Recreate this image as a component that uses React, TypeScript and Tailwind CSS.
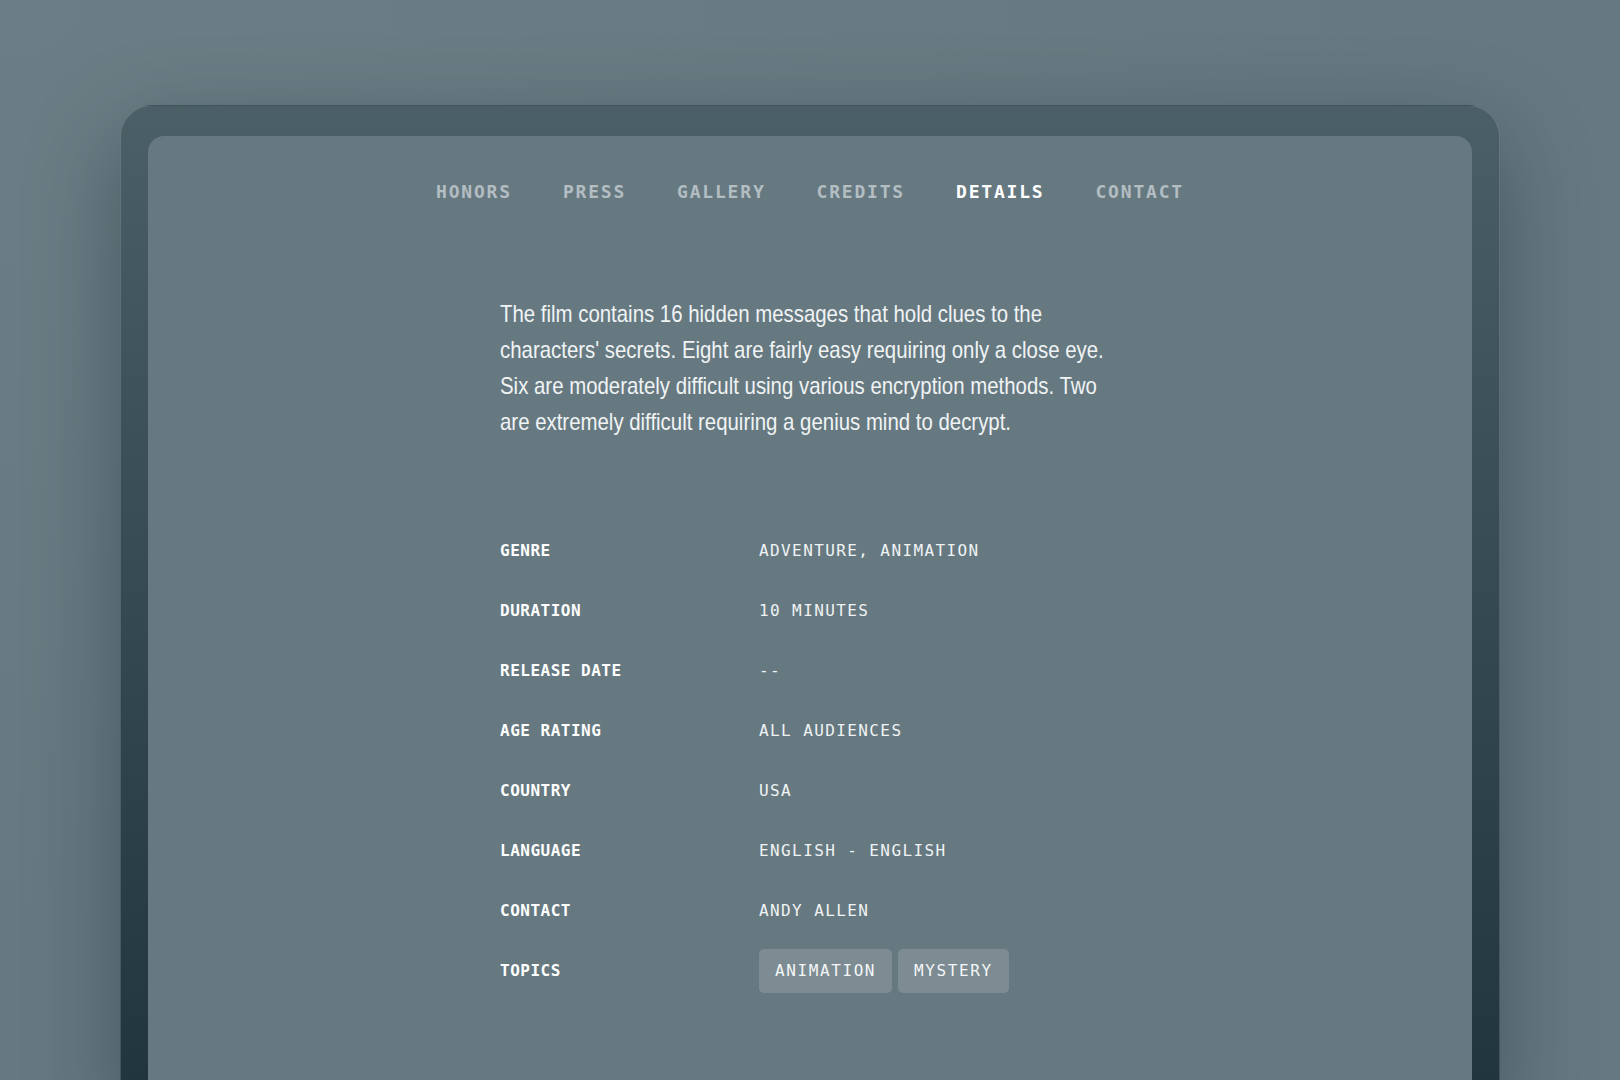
import React from "react";

const mono = "font-['DejaVu_Sans_Mono','Liberation_Mono',monospace]";

const rows: [string, string][] = [
  ["GENRE", "ADVENTURE, ANIMATION"],
  ["DURATION", "10 MINUTES"],
  ["RELEASE DATE", "--"],
  ["AGE RATING", "ALL AUDIENCES"],
  ["COUNTRY", "USA"],
  ["LANGUAGE", "ENGLISH - ENGLISH"],
  ["CONTACT", "ANDY ALLEN"],
];

const nav = ["HONORS", "PRESS", "GALLERY", "CREDITS", "DETAILS", "CONTACT"];

const lines = [
  "The film contains 16 hidden messages that hold clues to the",
  "characters' secrets. Eight are fairly easy requiring only a close eye.",
  "Six are moderately difficult using various encryption methods. Two",
  "are extremely difficult requiring a genius mind to decrypt.",
];

export default function App() {
  return (
    <div className="w-[1620px] h-[1080px] overflow-hidden bg-[radial-gradient(ellipse_at_top_left,#6b7e85,#667981_60%)] pt-[105px] px-[120px]">
      <div className="h-[1010px] rounded-[32px] border border-white/15 bg-gradient-to-b from-[#4b5f67] to-[#20343c] px-[27px] pt-[30px] shadow-[0_30px_90px_rgba(20,35,42,0.4)]">
        <div className="h-full rounded-2xl bg-[#667981]">
          <nav className={`flex justify-center gap-[51px] pt-[44px] ${mono} text-[18px] leading-[24px] font-bold tracking-[0.1em]`}>
            {nav.map((n) => (
              <span key={n} className={n === "DETAILS" ? "text-white" : "text-[#b3bdc2]"}>
                {n}
              </span>
            ))}
          </nav>
          <div className="w-[620px] mx-auto">
            <p className="mt-[92px] whitespace-nowrap origin-left scale-x-[0.85] font-['Liberation_Sans',Arial,sans-serif] text-[24px] leading-[36px] text-[#f0f3f4]">
              {lines.map((l, i) => (
                <React.Fragment key={i}>
                  {l}
                  {i < lines.length - 1 && <br />}
                </React.Fragment>
              ))}
            </p>
            <div className={`mt-[81px] grid grid-cols-[259px_1fr] ${mono} text-[16px]`}>
              {rows.map(([k, v]) => (
                <React.Fragment key={k}>
                  <div className="h-[60px] flex items-center font-bold tracking-[0.5px] text-white">{k}</div>
                  <div className="h-[60px] flex items-center tracking-[1.4px] text-[#f0f3f4]">{v}</div>
                </React.Fragment>
              ))}
              <div className="h-[60px] flex items-center font-bold tracking-[0.5px] text-white">TOPICS</div>
              <div className="h-[60px] flex items-center gap-[6px] tracking-[1.6px] text-[#f4f6f7]">
                <span className="h-[44px] px-4 flex items-center rounded-[5px] bg-[#7d8c93]">ANIMATION</span>
                <span className="h-[44px] px-4 flex items-center rounded-[5px] bg-[#7d8c93]">MYSTERY</span>
              </div>
            </div>
          </div>
        </div>
      </div>
    </div>
  );
}
